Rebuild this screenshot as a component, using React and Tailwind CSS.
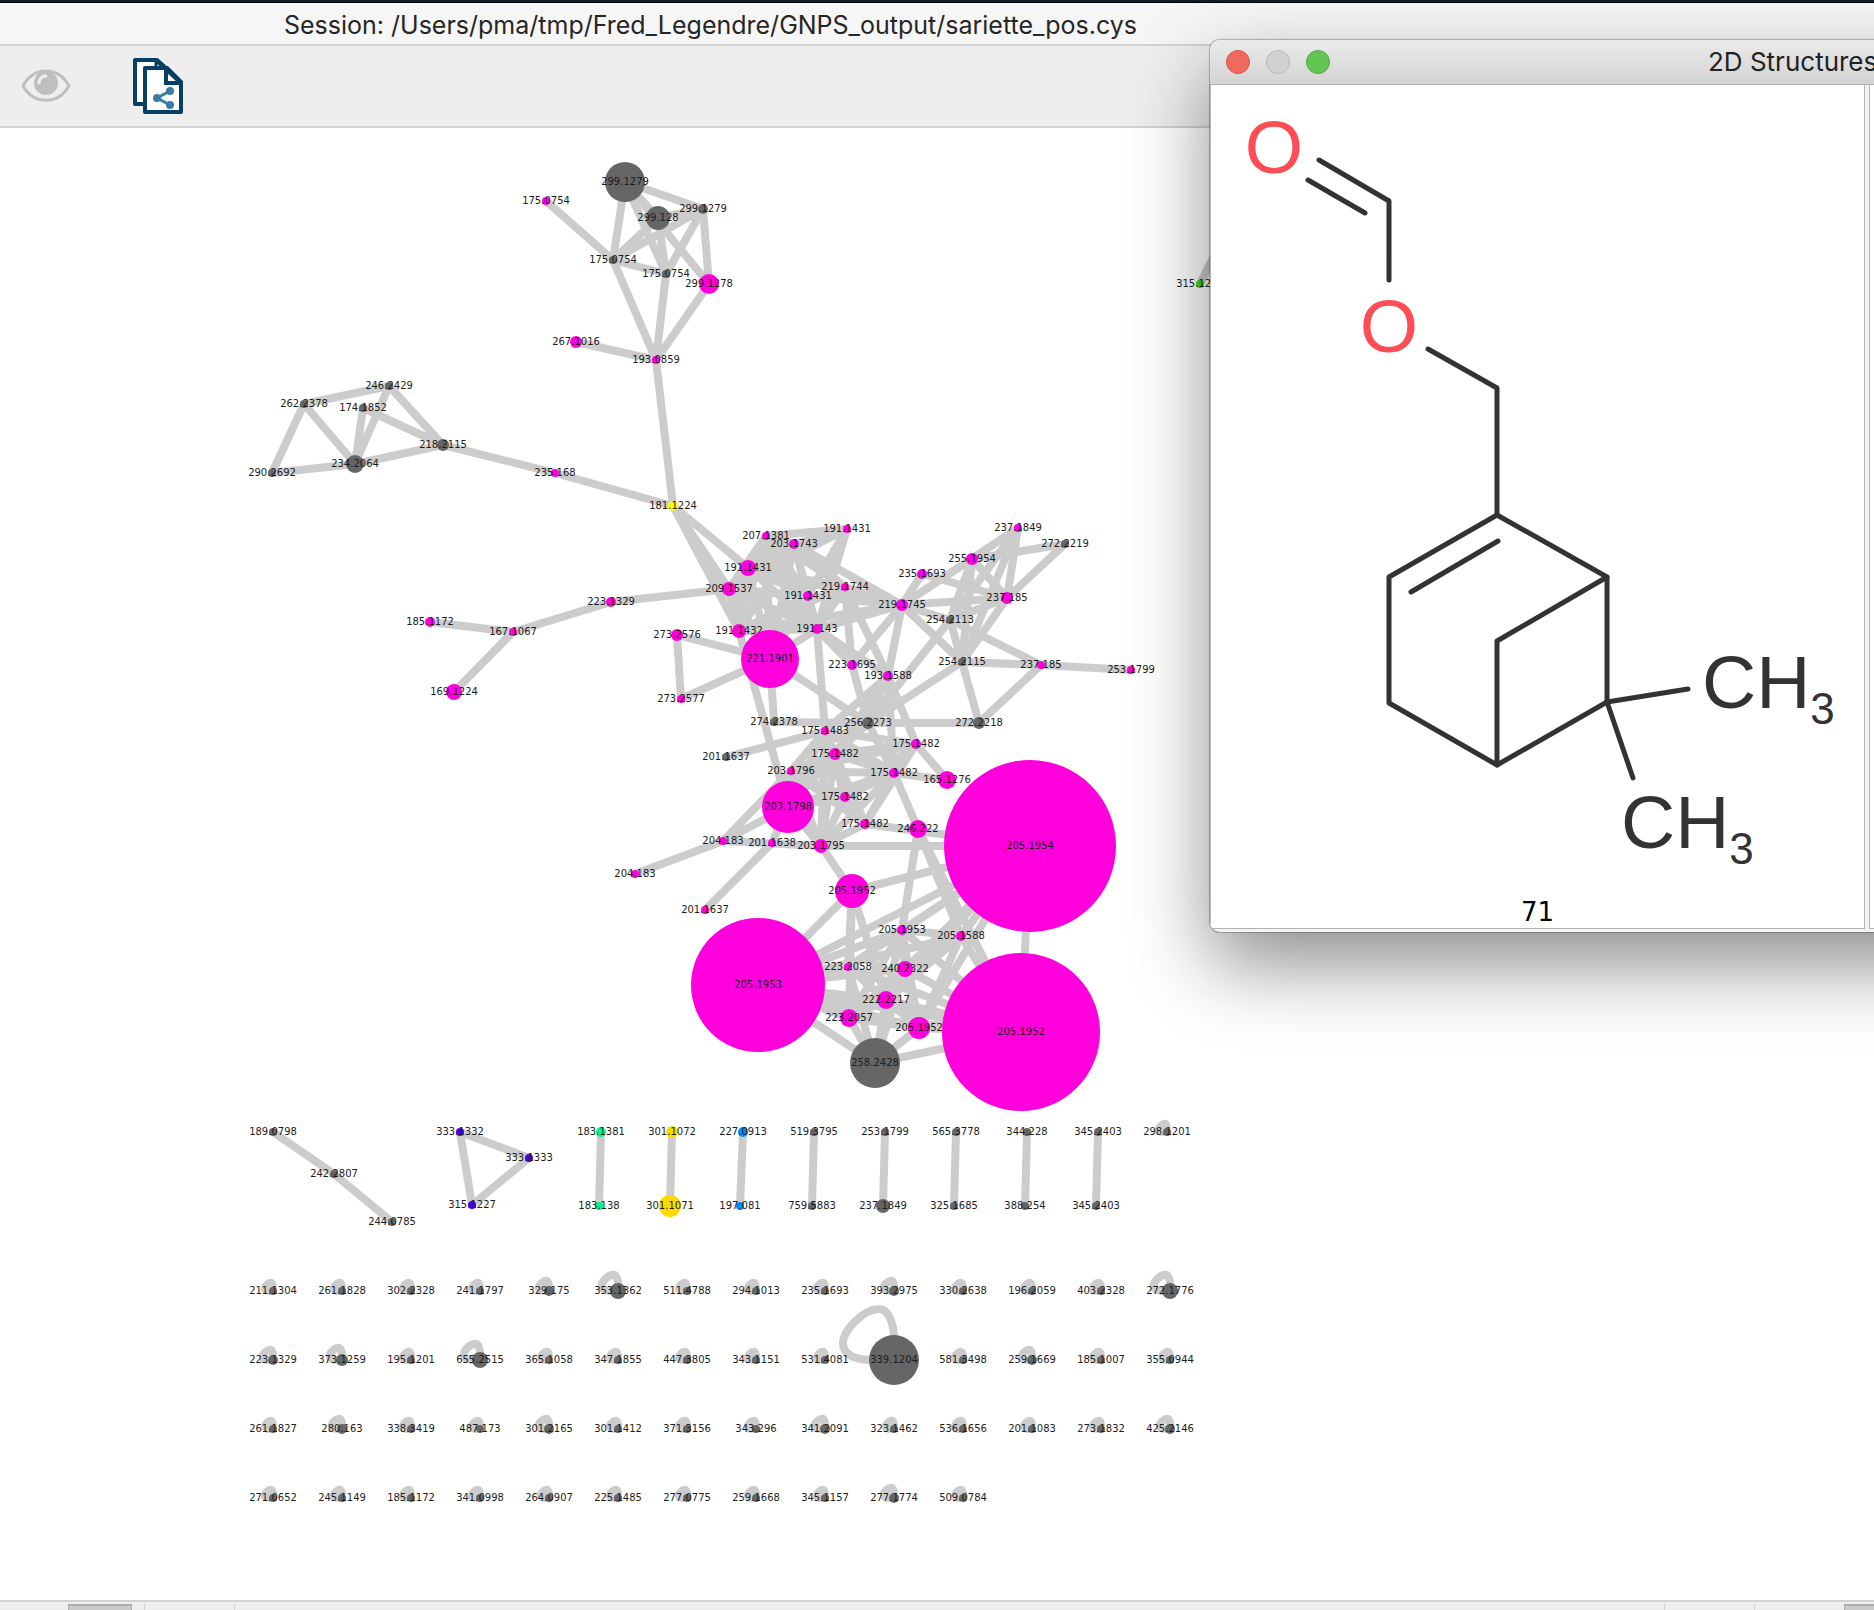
const MAGENTA = "#ff00dc";
const GREY = "#666666";

// id: [x, y, radius, label, colour]
const NODES = {
  a1: [625, 182, 20, "299.1279", GREY],
  a2: [546, 201, 4, "175.0754", MAGENTA],
  a3: [658, 218, 12, "299.128", GREY],
  a4: [703, 209, 5, "299.1279", GREY],
  a5: [613, 260, 4, "175.0754", GREY],
  a6: [666, 274, 4, "175.0754", GREY],
  a7: [709, 284, 10, "299.1278", MAGENTA],
  a8: [576, 342, 6, "267.1016", MAGENTA],
  a9: [656, 360, 4, "193.0859", MAGENTA],
  b1: [389, 386, 4, "246.2429", GREY],
  b2: [304, 404, 4, "262.2378", GREY],
  b3: [363, 408, 4, "174.1852", GREY],
  b4: [443, 445, 6, "218.2115", GREY],
  b5: [355, 464, 9, "234.2064", GREY],
  b6: [272, 473, 4, "290.2692", GREY],
  b7: [555, 473, 4, "235.168", MAGENTA],
  hub: [673, 506, 5, "181.1224", "#ffff00"],
  c1: [748, 568, 8, "191.1431", MAGENTA],
  c2: [729, 589, 7, "209.1537", MAGENTA],
  c3: [766, 536, 4, "207.1381", MAGENTA],
  c4: [794, 544, 5, "203.1743", MAGENTA],
  c5: [611, 602, 5, "223.1329", MAGENTA],
  c6: [430, 622, 5, "185.1172", MAGENTA],
  c7: [513, 632, 4, "167.1067", MAGENTA],
  c8: [454, 692, 8, "169.1224", MAGENTA],
  c9: [677, 635, 6, "273.2576", MAGENTA],
  c10: [681, 699, 4, "273.2577", MAGENTA],
  c11: [739, 631, 7, "191.1432", MAGENTA],
  d1: [847, 529, 4, "191.1431", MAGENTA],
  d2: [808, 596, 5, "191.1431", MAGENTA],
  d3: [845, 587, 4, "219.1744", MAGENTA],
  d4: [902, 605, 6, "219.1745", MAGENTA],
  d5: [817, 629, 5, "191.143", MAGENTA],
  d6: [1018, 528, 4, "237.1849", MAGENTA],
  d7: [1065, 544, 4, "272.2219", GREY],
  d8: [972, 559, 6, "255.1954", MAGENTA],
  d9: [922, 574, 5, "235.1693", MAGENTA],
  d10: [1007, 598, 6, "237.185", MAGENTA],
  d11: [950, 620, 4, "254.2113", GREY],
  d12: [962, 662, 4, "254.2115", GREY],
  d13: [1041, 665, 4, "237.185", MAGENTA],
  d14: [1131, 670, 4, "253.1799", MAGENTA],
  d15: [852, 665, 5, "223.1695", MAGENTA],
  d16: [888, 676, 5, "193.1588", MAGENTA],
  big1: [770, 659, 29, "221.1901", MAGENTA],
  e1: [774, 722, 4, "274.2378", GREY],
  e2: [868, 723, 6, "256.2273", GREY],
  e3: [979, 723, 6, "272.2218", GREY],
  f1: [825, 731, 4, "175.1483", MAGENTA],
  f2: [916, 744, 5, "175.1482", MAGENTA],
  f3: [835, 754, 6, "175.1482", MAGENTA],
  f4: [726, 757, 4, "201.1637", GREY],
  f5: [791, 771, 4, "203.1796", MAGENTA],
  f6: [894, 773, 5, "175.1482", MAGENTA],
  f7: [947, 780, 9, "165.1276", MAGENTA],
  f8: [845, 797, 5, "175.1482", MAGENTA],
  f9: [865, 824, 5, "175.1482", MAGENTA],
  f10: [918, 829, 9, "246.222", MAGENTA],
  f11: [723, 841, 4, "204.183", MAGENTA],
  f12: [772, 843, 4, "201.1638", MAGENTA],
  f13: [821, 846, 7, "203.1795", MAGENTA],
  f14: [705, 910, 4, "201.1637", MAGENTA],
  f15: [635, 874, 4, "204.183", MAGENTA],
  big2: [788, 807, 26, "203.1798", MAGENTA],
  g1: [852, 891, 17, "205.1952", MAGENTA],
  g2: [902, 930, 5, "205.1953", MAGENTA],
  g3: [961, 936, 5, "205.1588", MAGENTA],
  g4: [848, 967, 4, "223.2058", MAGENTA],
  g5: [905, 969, 8, "240.2322", MAGENTA],
  g6: [886, 1000, 9, "222.2217", MAGENTA],
  g7: [849, 1018, 9, "223.2057", MAGENTA],
  g8: [919, 1028, 11, "205.1952", MAGENTA],
  g9: [875, 1063, 25, "258.2428", GREY],
  big3: [1030, 846, 86, "205.1954", MAGENTA],
  big4: [758, 985, 67, "205.1953", MAGENTA],
  big5: [1021, 1032, 79, "205.1952", MAGENTA],
  h1: [273, 1132, 4, "189.0798", GREY],
  h2: [334, 1174, 4, "242.2807", GREY],
  h3: [392, 1222, 4, "244.0785", GREY],
  i1: [460, 1132, 4, "333.1332", "#4b00ea"],
  i2: [529, 1158, 4, "333.1333", "#4b00ea"],
  i3: [472, 1205, 4, "315.1227", "#4b00ea"],
  j1: [601, 1132, 5, "183.1381", "#00f58c"],
  j2: [599, 1206, 4, "183.138", "#00f58c"],
  k1: [672, 1132, 6, "301.1072", "#ffd900"],
  k2: [670, 1206, 11, "301.1071", "#ffd900"],
  l1: [743, 1132, 5, "227.0913", "#008cff"],
  l2: [740, 1206, 4, "197.081", "#008cff"],
  m1: [814, 1132, 4, "519.3795", GREY],
  m2: [812, 1206, 4, "759.5883", GREY],
  n1: [885, 1132, 4, "253.1799", GREY],
  n2: [883, 1206, 7, "237.1849", GREY],
  o1: [956, 1132, 4, "565.3778", GREY],
  o2: [954, 1206, 4, "325.1685", GREY],
  p1: [1027, 1132, 4, "344.228", GREY],
  p2: [1025, 1206, 4, "388.254", GREY],
  q1: [1098, 1132, 4, "345.2403", GREY],
  q2: [1096, 1206, 4, "345.2403", GREY],
  r1: [1200, 284, 4, "315.1227", "#3ae000"],
};

// each entry: a node followed by its neighbours
const LINKS = [
  "a1 a3 a4 a5 a6 a7",
  "a3 a4 a5 a6",
  "a4 a5 a6 a7",
  "a5 a6 a2 a9",
  "a9 a6 a7 a8 hub",
  "b1 b2 b5 b4",
  "b2 b5 b6",
  "b3 b5 b4",
  "b5 b4 b6",
  "b7 b4 hub",
  "hub c1 c2 c11 big1",
  "c2 c5 c1 c3 c4 c11 d1 d2 d5 big1",
  "c7 c5 c6 c8",
  "c9 c10 big1",
  "c10 big1",
  "c1 c3 c4 c11 d2 d3 d5 big1 d1 d4",
  "c3 c4 d1 d2 d3 c11 d5 big1",
  "c4 d1 d2 d3 d5 c11 d4 big1",
  "d1 d2 d5 big1",
  "d2 d5 c11 d4 big1",
  "d3 d4 d5 d15",
  "c11 d5 d4 d3 big2",
  "d5 d4 big1 d15 d16 f1",
  "d4 d9 d8 d6 d10 d11 d12 d15 d16",
  "d9 d10",
  "d8 d6 d7 d10 d11 d12",
  "d6 d10 d11 d12",
  "d7 d10",
  "d11 d10 d12 d13 e2",
  "d12 d10 d13 e3 e2",
  "d13 d14 e3",
  "d15 e2",
  "d16 d3 e2 f1 f3 f6 f2",
  "big1 e1 e2",
  "e2 e1 e3 f3 f6",
  "f1 f2 f3 f4 f5 f6 f9 f13 big2 f8",
  "f2 f3 f6 f7 f5 f8 f9",
  "f3 f5 f6 f8 f9 big2",
  "f6 f5 f7 f8 f9 f10 f13 big2",
  "f8 f9 f5 f13 big2",
  "f9 f13 big3 f5",
  "f5 f11 big2 f13",
  "big2 f11 f12 f13",
  "f13 f11 f3 g1 big3",
  "f12 f14",
  "f11 f15",
  "f10 g2 g3 big5",
  "g1 big3 big4 g4 g7 g6",
  "big3 big4 g2 g3 g4 g5 g6 g8 big5",
  "big4 g2 g3 g4 g5 g6 g7 g8 g9 big5",
  "big5 g2 g3 g4 g5 g6 g7 g8 g9",
  "g2 g3 g4 g5 g6 g7 g8",
  "g3 g5 g6 g8 g7",
  "g4 g6 g8",
  "g9 g7 g6 g8 g4 g5",
  "g5 g7 g8",
  "g7 g6 g8",
  "h2 h1 h3",
  "i1 i2 i3",
  "i2 i3",
  "j1 j2",
  "k1 k2",
  "l1 l2",
  "m1 m2",
  "n1 n2",
  "o1 o2",
  "p1 p2",
  "q1 q2",
];

const EDGES = LINKS.flatMap((line) => {
  const [from, ...to] = line.split(" ");
  return to.map((t) => [from, t]);
});

const SINGLETON_ROWS = [
  "211.1304 261.1828 302.2328 241.1797 329.175 353.1362 511.4788 294.1013 235.1693 393.2975 330.2638 196.2059 403.2328 272.1776",
  "223.1329 373.1259 195.1201 655.2515 365.1058 347.1855 447.3805 343.1151 531.4081 339.1204 581.3498 259.1669 185.1007 355.0944",
  "261.1827 280.163 338.3419 487.173 301.2165 301.1412 371.3156 343.296 341.2091 323.1462 536.1656 201.1083 273.1832 425.2146",
  "271.0652 245.1149 185.1172 341.0998 264.0907 225.1485 277.0775 259.1668 345.1157 277.1774 509.0784",
];

const SINGLETON_RADIUS = {
  "0-5": 8, "0-13": 8, "0-4": 5, "0-9": 5, "1-0": 5, "1-1": 6, "1-3": 8,
  "1-9": 25, "1-11": 5, "2-1": 5, "2-4": 5, "2-8": 5, "2-13": 5, "3-9": 5,
};

const SINGLETONS = [
  [1167, 1132, 4, "298.1201", GREY],
  ...SINGLETON_ROWS.flatMap((row, j) =>
    row.split(" ").map((label, i) => [273 + i * 69, 1291 + j * 69, SINGLETON_RADIUS[`${j}-${i}`] ?? 4, label, GREY])
  ),
];

function loopPath(x, y, r) {
  const k = r / 25;
  const p = (dx, dy) => `${x + dx * k} ${y + dy * k}`;
  return `M${p(0, -20)} C${p(0, -36)} ${p(-5, -51)} ${p(-15, -51)} C${p(-30, -51)} ${p(-51, -30)} ${p(-51, -17)} C${p(-51, -5)} ${p(-40, 0)} ${p(-20, 0)}`;
}

function Node({ node: [x, y, r, label, color] }) {
  return (
    <g>
      <circle cx={x} cy={y} r={r} fill={color} />
      <text x={x} y={y + 3} textAnchor="middle" fill="#1c1c1c">
        {label}
      </text>
    </g>
  );
}

function Network() {
  return (
    <svg
      width="1210"
      height="1472"
      viewBox="0 128 1210 1472"
      className="block shrink-0 font-['DejaVu_Sans',sans-serif] text-[10px]"
      role="img"
      aria-label="Molecular network"
    >
      <g stroke="#cccccc" strokeWidth="8" fill="none">
        {EDGES.map(([a, b]) => (
          <line key={`${a}-${b}`} x1={NODES[a][0]} y1={NODES[a][1]} x2={NODES[b][0]} y2={NODES[b][1]} />
        ))}
        <line x1="1200" y1="284" x2="1222" y2="240" />
        {SINGLETONS.map(([x, y, r]) => (
          <path key={`${x}-${y}`} d={loopPath(x, y, r)} />
        ))}
      </g>
      {Object.entries(NODES).map(([id, node]) => (
        <Node key={id} node={node} />
      ))}
      {SINGLETONS.map((node) => (
        <Node key={`${node[0]}-${node[1]}`} node={node} />
      ))}
    </svg>
  );
}

function EyeIcon() {
  return (
    <svg width="50" height="34" viewBox="0 0 50 34" aria-hidden="true">
      <path d="M2 17C13 -3 37 -3 48 17C37 36 13 36 2 17Z" fill="none" stroke="#bfbfbf" strokeWidth="3" />
      <circle cx="25" cy="14" r="12" fill="#bfbfbf" />
      <path d="M18 14c0-4 3-7 7-7" fill="none" stroke="#eeeeee" strokeWidth="3" strokeLinecap="round" />
    </svg>
  );
}

function CopyNetworkIcon() {
  return (
    <svg width="52" height="58" viewBox="0 0 52 58" aria-hidden="true">
      <path d="M3 3H25L36 13V47H3Z" fill="#ffffff" stroke="#053f63" strokeWidth="4" strokeLinejoin="round" />
      <path d="M24 3V10" stroke="#053f63" strokeWidth="3" />
      <path d="M13 11H35L49 25V55H13Z" fill="#ffffff" stroke="#053f63" strokeWidth="4" strokeLinejoin="round" />
      <path d="M25 4L49 26" stroke="#053f63" strokeWidth="4" />
      <path d="M34 12V26H49" fill="none" stroke="#053f63" strokeWidth="4" />
      <path d="M38 34L25 41L38 48" fill="none" stroke="#3a7ca5" strokeWidth="3" />
      <circle cx="38" cy="34" r="4" fill="#3a7ca5" />
      <circle cx="25" cy="41" r="4" fill="#3a7ca5" />
      <circle cx="38" cy="48" r="4" fill="#3a7ca5" />
    </svg>
  );
}

function Molecule() {
  return (
    <svg
      width="653"
      height="807"
      viewBox="1211 85 653 807"
      className="block font-['Liberation_Sans',Arial,sans-serif] text-[75px]"
      role="img"
      aria-label="Structure 71"
    >
      <g fill="none" stroke="#333333" strokeWidth="5" strokeLinecap="round" strokeLinejoin="round">
        <path d="M1319 160L1389 201V280" />
        <path d="M1308 180L1365 213" />
        <path d="M1428 349L1497 388V515" />
        <path d="M1497 515L1389 577V703L1497 765L1607 702V577Z" />
        <path d="M1498 541L1411 592" />
        <path d="M1607 577L1497 641V765" />
        <path d="M1607 702L1688 689" />
        <path d="M1607 702L1633 778" />
      </g>
      <g fill="#ff4d55" textAnchor="middle">
        <text x="1274" y="173">O</text>
        <text x="1389" y="352">O</text>
      </g>
      <g fill="#333333">
        <text x="1702" y="708">
          CH<tspan dy="16" className="text-[44px]">3</tspan>
        </text>
        <text x="1621" y="848">
          CH<tspan dy="16" className="text-[44px]">3</tspan>
        </text>
      </g>
    </svg>
  );
}

function StructuresWindow() {
  return (
    <section className="absolute top-10 left-[1210px] flex w-[1310px] flex-col overflow-hidden rounded-[10px] bg-[#f4f4f4] shadow-[0_0_1px_1px_rgba(0,0,0,0.25),0_32px_80px_rgba(0,0,0,0.45)]">
      <header className="flex h-[45px] items-center border-b border-[#b1b1b1] bg-linear-to-b from-[#ebebeb] to-[#d3d3d3] pl-4">
        <div className="flex gap-4">
          <button type="button" aria-label="Close" className="size-6 rounded-full border border-[#d4574c] bg-[#ee6a5e]" />
          <button type="button" aria-label="Minimize" className="size-6 rounded-full border border-[#b8b8b8] bg-[#d1d1d1]" />
          <button type="button" aria-label="Zoom" className="size-6 rounded-full border border-[#52a842] bg-[#62c654]" />
        </div>
        <h2 className="ml-[378px] text-[26px] leading-8 text-[#222]">2D Structures</h2>
      </header>
      <div className="flex gap-1">
        <figure className="flex w-[655px] flex-col border-x border-b border-[#b4b4b4] bg-white">
          <Molecule />
          <figcaption className="h-9 text-center font-['DejaVu_Sans',sans-serif] text-[26px] leading-10 text-black">71</figcaption>
        </figure>
        <div className="flex-1 border border-t-0 border-[#b4b4b4] bg-white" />
      </div>
      <div className="h-[3px]" />
    </section>
  );
}

export default function App() {
  return (
    <div className="relative flex h-screen flex-col overflow-hidden bg-white font-['Inter',sans-serif]">
      <div className="h-[3px] shrink-0 border-b border-black bg-[#141c2c]" />
      <header className="flex h-[43px] shrink-0 items-center border-b-2 border-[#d2d2d2] bg-[#f6f6f6] pt-0.5 pl-[284px]">
        <h1 className="text-[25px] leading-8 whitespace-nowrap text-[#262626]">
          Session: /Users/pma/tmp/Fred_Legendre/GNPS_output/sariette_pos.cys
        </h1>
      </header>
      <nav className="flex h-[82px] shrink-0 items-center gap-[61px] border-b-2 border-[#d2d2d2] bg-[#eeeeee] pl-[21px]">
        <button type="button" aria-label="Show all" disabled>
          <EyeIcon />
        </button>
        <button type="button" aria-label="New network from selection">
          <CopyNetworkIcon />
        </button>
      </nav>
      <main className="flex min-h-0 flex-1 overflow-hidden">
        <Network />
      </main>
      <footer className="flex h-[10px] shrink-0 items-end border-t-2 border-[#d2d2d2] bg-[#eeeeee] pl-[68px]">
        <button type="button" aria-label="Grid view" className="h-1.5 w-16 border-x border-t-2 border-[#aaaaaa] bg-[#cacaca]" />
        <div className="ml-3 h-1.5 w-[91px] border-x border-[#d2d2d2]" />
        <div className="mr-[89px] ml-auto h-1.5 border-l border-[#d2d2d2]" />
        <div className="mr-[89px] h-1.5 border-l border-[#d2d2d2]" />
        <button type="button" aria-label="Show details" className="h-1.5 w-[30px] border-t-2 border-l border-[#aaaaaa] bg-[#cacaca]" />
      </footer>
      <StructuresWindow />
    </div>
  );
}
